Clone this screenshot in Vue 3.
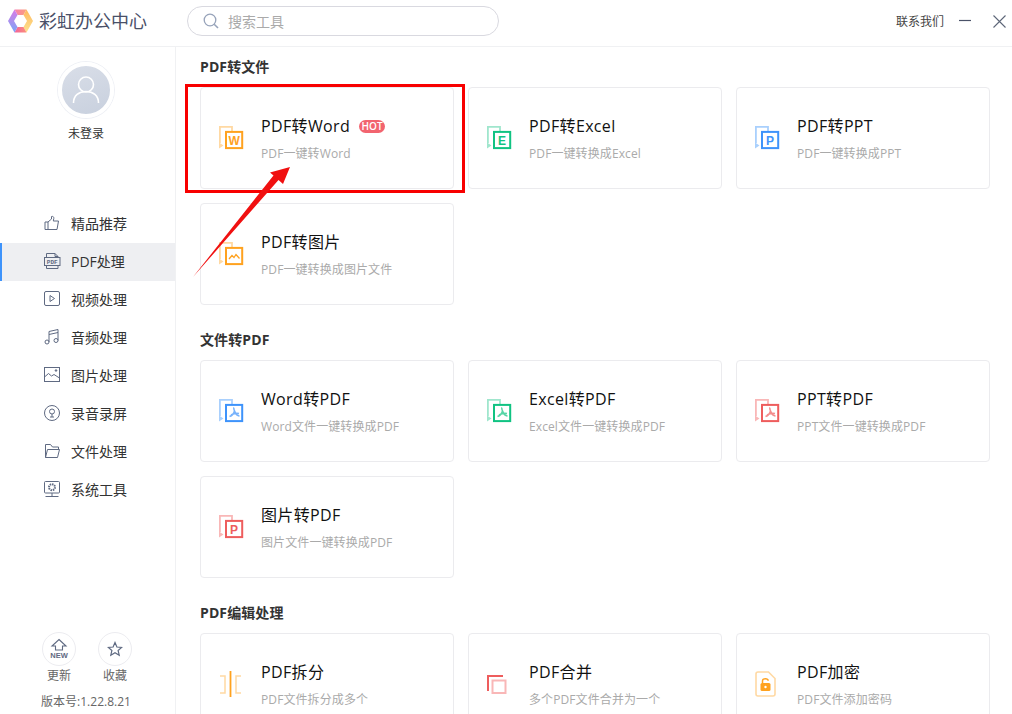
<script setup>
const nav = [
  { key: 'thumb', label: '精品推荐' },
  { key: 'pdf', label: 'PDF处理', active: true },
  { key: 'video', label: '视频处理' },
  { key: 'music', label: '音频处理' },
  { key: 'image', label: '图片处理' },
  { key: 'mic', label: '录音录屏' },
  { key: 'folder', label: '文件处理' },
  { key: 'system', label: '系统工具' },
]
const colors = {
  orange: ['#ffa21f', '#ffd9a3'],
  green: ['#10c382', '#a0e6cd'],
  blue: ['#3e93fb', '#a9d0fd'],
  red: ['#ee5d5d', '#f9b7b7'],
}
const sections = [
  {
    title: 'PDF转文件',
    cards: [
      { title: 'PDF转Word', sub: 'PDF一键转Word', color: 'orange', letter: 'W', hot: true },
      { title: 'PDF转Excel', sub: 'PDF一键转换成Excel', color: 'green', letter: 'E' },
      { title: 'PDF转PPT', sub: 'PDF一键转换成PPT', color: 'blue', letter: 'P' },
      { title: 'PDF转图片', sub: 'PDF一键转换成图片文件', color: 'orange', glyph: 'pic' },
    ],
  },
  {
    title: '文件转PDF',
    cards: [
      { title: 'Word转PDF', sub: 'Word文件一键转换成PDF', color: 'blue', glyph: 'acrobat' },
      { title: 'Excel转PDF', sub: 'Excel文件一键转换成PDF', color: 'green', glyph: 'acrobat' },
      { title: 'PPT转PDF', sub: 'PPT文件一键转换成PDF', color: 'red', glyph: 'acrobat' },
      { title: '图片转PDF', sub: '图片文件一键转换成PDF', color: 'red', letter: 'P' },
    ],
  },
  {
    title: 'PDF编辑处理',
    cards: [
      { title: 'PDF拆分', sub: 'PDF文件拆分成多个', color: 'orange', glyph: 'split' },
      { title: 'PDF合并', sub: '多个PDF文件合并为一个', color: 'red', glyph: 'merge' },
      { title: 'PDF加密', sub: 'PDF文件添加密码', color: 'orange', glyph: 'lock' },
    ],
  },
]
const isStack = (c) => c.letter || c.glyph === 'pic' || c.glyph === 'acrobat'
</script>

<template>
  <div class="app">
    <header class="topbar">
      <div class="brand">
        <svg class="logo" width="25" height="24" viewBox="0 0 25 24">
          <defs>
            <linearGradient id="lgTop" x1="0" y1="0" x2="1" y2="0"><stop offset="0" stop-color="#f77fb0"/><stop offset="1" stop-color="#fba07a"/></linearGradient>
            <linearGradient id="lgRight" x1="0" y1="0" x2="0" y2="1"><stop offset="0" stop-color="#fdb860"/><stop offset="1" stop-color="#fee38f"/></linearGradient>
            <linearGradient id="lgBottom" x1="1" y1="0" x2="0" y2="0"><stop offset="0" stop-color="#fb8f7a"/><stop offset="1" stop-color="#f2629c"/></linearGradient>
            <linearGradient id="lgLeft" x1="0" y1="0" x2="0" y2="1"><stop offset="0" stop-color="#d97be6"/><stop offset="1" stop-color="#7aa5f7"/></linearGradient>
          </defs>
          <polygon points="6.500,0.500 18.500,0.500 15.500,6 9.500,6" fill="url(#lgTop)"/>
          <polygon points="18.500,0.500 25,12 18.500,23.500 15.500,18 19,12 15.500,6" fill="url(#lgRight)"/>
          <polygon points="18.500,23.500 6.500,23.500 9.500,18 15.500,18" fill="url(#lgBottom)"/>
          <polygon points="6.500,0.500 0,12 6.500,23.500 9.500,18 6,12 9.500,6" fill="url(#lgLeft)"/>
        </svg>
        <span class="brand-name">彩虹办公中心</span>
      </div>
      <div class="search">
        <svg width="16" height="16" viewBox="0 0 16 16" fill="none" stroke="#97a3ba" stroke-width="1.3">
          <circle cx="7" cy="7" r="5.800"/>
          <path d="M11.200 11.200 15 15" stroke-width="1.600"/>
        </svg>
        <span>搜索工具</span>
      </div>
      <div class="top-actions">
        <span class="contact">联系我们</span>
        <svg width="12" height="12" viewBox="0 0 12 12" stroke="#4a5268" stroke-width="1.200"><path d="M0 5.500H12"/></svg>
        <svg class="close" width="13" height="13" viewBox="0 0 13 13" stroke="#5d6678" stroke-width="1.100"><path d="M.5.5l12 12M12.500.5l-12 12"/></svg>
      </div>
    </header>

    <div class="body">
      <aside class="side">
        <div class="user">
          <div class="avatar">
            <svg width="48" height="48" viewBox="0 0 48 48" fill="none" stroke="#fff" stroke-width="1.600">
              <circle cx="24" cy="18.500" r="7.500"/>
              <path d="M11.500 37c0-7.500 5.500-11.500 12.500-11.500S36.500 29.500 36.500 37"/>
            </svg>
          </div>
          <span class="user-name">未登录</span>
        </div>
        <nav class="nav">
          <div v-for="n in nav" :key="n.key" class="nav-item" :class="{ active: n.active }">
            <svg width="18" height="18" viewBox="0 0 18 18" fill="none" stroke="#5f6a82" stroke-width="1">
              <template v-if="n.key === 'thumb'">
                <path d="M2 8h3v7.500H2zM5 8l3.500-3V2.500c1.500-.5 2.500.5 2.300 2L10.300 7H15.500l-1.500 8.500H5"/>
              </template>
              <template v-else-if="n.key === 'pdf'">
                <path d="M3.500 5V1.500H12L15 4.500V5M3.500 13.500v3H15v-3M12 1.500V4.500H15"/>
                <rect x="1.500" y="5.500" width="15.500" height="8"/>
                <text x="9.250" y="12" text-anchor="middle" class="pdf-text">PDF</text>
              </template>
              <template v-else-if="n.key === 'video'">
                <rect x="1.500" y="1.500" width="15" height="14" rx="1.500"/>
                <path d="M7 5.500v6l4.500-3z"/>
              </template>
              <template v-else-if="n.key === 'music'">
                <circle cx="4" cy="14" r="2"/><circle cx="13" cy="12.500" r="2"/>
                <path d="M6 14V3.500L15 1.500V12.500M6 6.500l9-2"/>
              </template>
              <template v-else-if="n.key === 'image'">
                <rect x="1.500" y="1.500" width="15" height="14"/>
                <path d="M1.500 11l4-3.500 3 2.500 2.500-1.500 5.500 3.500"/>
                <circle cx="13" cy="4.500" r=".8" fill="#5f6a82"/>
              </template>
              <template v-else-if="n.key === 'mic'">
                <circle cx="9" cy="9" r="7.500"/>
                <circle cx="9" cy="7.500" r="2.500"/>
                <path d="M9 10v3M7 13h4"/>
              </template>
              <template v-else-if="n.key === 'folder'">
                <path d="M2.500 15.500V2.500h5l2 2.500h6v2.500M2.500 15.500h12l2-8H4.500z"/>
              </template>
              <template v-else>
                <rect x="1.500" y="1.500" width="15" height="11.500" rx="1"/>
                <circle cx="9" cy="7.200" r="3" stroke-dasharray="1.500 .8" stroke-width="2"/>
                <path d="M9 13v3M2.500 16.500h13"/>
              </template>
            </svg>
            <span>{{ n.label }}</span>
          </div>
        </nav>
        <div class="side-foot">
          <div class="foot-btns">
            <div class="foot-btn">
              <div class="circle">
                <svg width="22" height="22" viewBox="0 0 22 22" fill="none" stroke="#5f6a82" stroke-width="1.100">
                  <path d="M11 1.500 18 8h-3.500v4h-7V8H4z"/>
                  <text x="11" y="20" text-anchor="middle" class="new-text">NEW</text>
                </svg>
              </div>
              <span>更新</span>
            </div>
            <div class="foot-btn">
              <div class="circle">
                <svg width="16" height="16" viewBox="0 0 16 16" fill="none" stroke="#5f6a82" stroke-width="1.200">
                  <path d="M8 1.500 9.900 6l4.800.4-3.600 3.100 1.100 4.700L8 11.700l-4.200 2.500 1.100-4.700L1.300 6.400 6.100 6z"/>
                </svg>
              </div>
              <span>收藏</span>
            </div>
          </div>
          <div class="version">版本号:1.22.8.21</div>
        </div>
      </aside>

      <main class="main">
        <section v-for="s in sections" :key="s.title" class="section">
          <h2 class="section-title">{{ s.title }}</h2>
          <div class="grid">
            <div v-for="c in s.cards" :key="c.title" class="card">
              <svg class="card-icon" width="24" height="26" viewBox="0 0 24 26" fill="none">
                <template v-if="isStack(c)">
                  <path d="M.9 18V1.900H13V6" :stroke="colors[c.color][1]" stroke-width="1.800"/>
                  <path d="M0 17.500v6l4.500-3z" :fill="colors[c.color][1]"/>
                  <rect x="7" y="6.900" width="16.200" height="16.200" fill="#fff" :stroke="colors[c.color][0]" stroke-width="2"/>
                  <text v-if="c.letter" x="15.100" y="20" text-anchor="middle" class="letter" :fill="colors[c.color][0]">{{ c.letter }}</text>
                  <path v-else-if="c.glyph === 'pic'" d="M10 18l3-3.500 2 2 2-3 3.500 4" :stroke="colors[c.color][0]" stroke-width="1.300"/>
                  <path v-else d="M15 9.500c-.8 1 .5 3.500 1.500 5.500 1 2 2.500 3 4 2.800M15.500 13c-.5 2-2 4.500-5 5.500M12 17c2.500-1.500 5.500-2 8-1.500" :stroke="colors[c.color][0]" stroke-opacity=".7" stroke-width="1.600"/>
                </template>
                <template v-else-if="c.glyph === 'split'">
                  <path d="M1 5H6V22H1M22 5H17V22H22" :stroke="colors[c.color][1]" stroke-width="1.500"/>
                  <path d="M11.500 0V26" :stroke="colors[c.color][0]" stroke-width="1.800"/>
                </template>
                <template v-else-if="c.glyph === 'merge'">
                  <path d="M1 20V5H16" :stroke="colors[c.color][0]" stroke-width="2"/>
                  <rect x="5.500" y="9.500" width="13" height="12.500" :stroke="colors[c.color][1]" stroke-width="2"/>
                </template>
                <template v-else>
                  <path d="M1 3C1 1.800 1.800 1 3 1H13.500L20 7.500V23C20 24.200 19.200 25 18 25H3C1.800 25 1 24.200 1 23Z" :stroke="colors[c.color][1]" stroke-width="1.600"/>
                  <rect x="5.500" y="12" width="10" height="8" rx="1.500" :fill="colors[c.color][0]"/>
                  <path d="M7.500 12V9.800C7.500 7 13 7 13.200 9.800" :stroke="colors[c.color][0]" stroke-width="1.500"/>
                  <circle cx="10.500" cy="16" r="1.200" fill="#fff"/>
                </template>
              </svg>
              <div class="card-text">
                <div class="card-title">
                  <span>{{ c.title }}</span>
                  <span v-if="c.hot" class="hot">HOT</span>
                </div>
                <div class="card-sub">{{ c.sub }}</div>
              </div>
            </div>
          </div>
        </section>
      </main>
    </div>

    <svg class="annotation" width="1012" height="714" viewBox="0 0 1012 714" fill="none">
      <rect x="186.500" y="85.500" width="277" height="106" stroke="#f80000" stroke-width="3"/>
      <path d="M290 167 283 184 278.500 180 193 277 273.500 175.500 270 172.500Z" fill="#f01010"/>
    </svg>
  </div>
</template>

<style scoped>
.app {
  position: relative;
  width: 1012px;
  height: 714px;
  overflow: hidden;
  background: #fff;
  display: flex;
  flex-direction: column;
  font-family: "Open Sans", "Noto Sans CJK SC", sans-serif;
  color: #333;
}
.topbar {
  height: 46px;
  flex: none;
  display: flex;
  align-items: center;
  border-bottom: 1px solid #f0f1f3;
  box-sizing: content-box;
  padding-right: 6px;
  padding-bottom: 0;
}
.topbar > * {
  margin-bottom: 4px;
}
.brand {
  width: 187px;
  display: flex;
  align-items: center;
  padding-left: 8px;
  box-sizing: border-box;
  flex: none;
}
.brand-name {
  margin-left: 6px;
  font-size: 18px;
  line-height: 24px;
  color: #4a5068;
}
.search {
  width: 312px;
  height: 30px;
  box-sizing: border-box;
  border: 1px solid #d9d9e0;
  border-radius: 15px;
  display: flex;
  align-items: center;
  padding-left: 15px;
  gap: 9px;
  font-size: 14px;
  color: #aaa;
}
.top-actions {
  margin-left: auto;
  display: flex;
  align-items: center;
  font-size: 12px;
  color: #444;
}
.contact { margin-right: 15px; }
.close { margin-left: 22px; }
.body {
  flex: 1;
  min-height: 0;
  display: flex;
}
.side {
  width: 176px;
  flex: none;
  box-sizing: border-box;
  border-right: 1px solid #f0f1f3;
  display: flex;
  flex-direction: column;
}
.user {
  display: flex;
  flex-direction: column;
  align-items: center;
  padding-top: 15px;
  padding-right: 3px;
}
.avatar {
  width: 48px;
  height: 48px;
  border-radius: 50%;
  background: linear-gradient(160deg, #d9dee8, #c8d0de);
  border: 4px solid #fff;
  box-shadow: 0 0 0 1px #eef0f5;
}
.user-name {
  margin-top: 6px;
  font-size: 12px;
  line-height: 20px;
  color: #333;
}
.nav {
  margin-top: 61px;
}
.nav-item {
  height: 38px;
  display: flex;
  align-items: center;
  padding-left: 43px;
  padding-bottom: 2px;
  gap: 10px;
  font-size: 14px;
  color: #333;
  box-sizing: border-box;
}
.nav-item.active {
  background: #eeeff2;
  box-shadow: inset 2px 0 0 #3e93fb;
}
.pdf-text {
  font: bold 6px "Liberation Mono", monospace;
  fill: #5f6a82;
  stroke: none;
}
.new-text {
  font: bold 7.500px "Liberation Sans", sans-serif;
  fill: #5f6a82;
  stroke: none;
}
.side-foot {
  margin-top: auto;
  padding-bottom: 2px;
  display: flex;
  flex-direction: column;
  align-items: center;
}
.foot-btns {
  display: flex;
  gap: 22px;
  padding-right: 1px;
}
.foot-btn {
  display: flex;
  flex-direction: column;
  align-items: center;
  font-size: 12px;
  line-height: 20px;
  color: #666;
}
.circle {
  width: 34px;
  height: 34px;
  box-sizing: border-box;
  border: 1px solid #ececf0;
  border-radius: 50%;
  display: flex;
  align-items: center;
  justify-content: center;
}
.version {
  margin-top: 6px;
  margin-right: 3px;
  font-size: 12px;
  line-height: 20px;
  color: #666;
}
.main {
  flex: 1;
  min-width: 0;
  padding: 10px 22px 0 24px;
  overflow: hidden;
}
.section + .section { margin-top: 25px; }
.section-title {
  margin: 0 0 10px;
  font-size: 14px;
  line-height: 20px;
  font-weight: 700;
  color: #333;
  letter-spacing: .1px;
}
.grid {
  display: grid;
  grid-template-columns: repeat(3, 254px);
  gap: 14px;
}
.card {
  height: 102px;
  box-sizing: border-box;
  border: 1px solid #ebebee;
  border-radius: 4px;
  display: flex;
  align-items: center;
  padding-left: 18px;
  background: #fff;
}
.card-icon {
  flex: none;
  margin-right: 18px;
  overflow: visible;
}
.card-text {
  display: flex;
  flex-direction: column;
  padding-top: 2px;
}
.card-title {
  display: flex;
  align-items: center;
  font-size: 16px;
  line-height: 24px;
  color: #111;
  letter-spacing: .35px;
}
.hot {
  margin-left: 9px;
  width: 26px;
  height: 13px;
  border-radius: 7px;
  background: #f2646f;
  color: #fff;
  font-size: 10px;
  font-weight: 600;
  line-height: 13px;
  text-align: center;
  letter-spacing: 0;
}
.card-sub {
  margin-top: 6px;
  font-size: 12px;
  line-height: 20px;
  color: #aaa;
  letter-spacing: .1px;
}
.letter {
  font: bold 12px "Liberation Sans", sans-serif;
}
.annotation {
  position: absolute;
  left: 0;
  top: 0;
  pointer-events: none;
}
</style>

<style>
html, body { margin: 0; overflow: hidden; background: #fff; }
</style>
